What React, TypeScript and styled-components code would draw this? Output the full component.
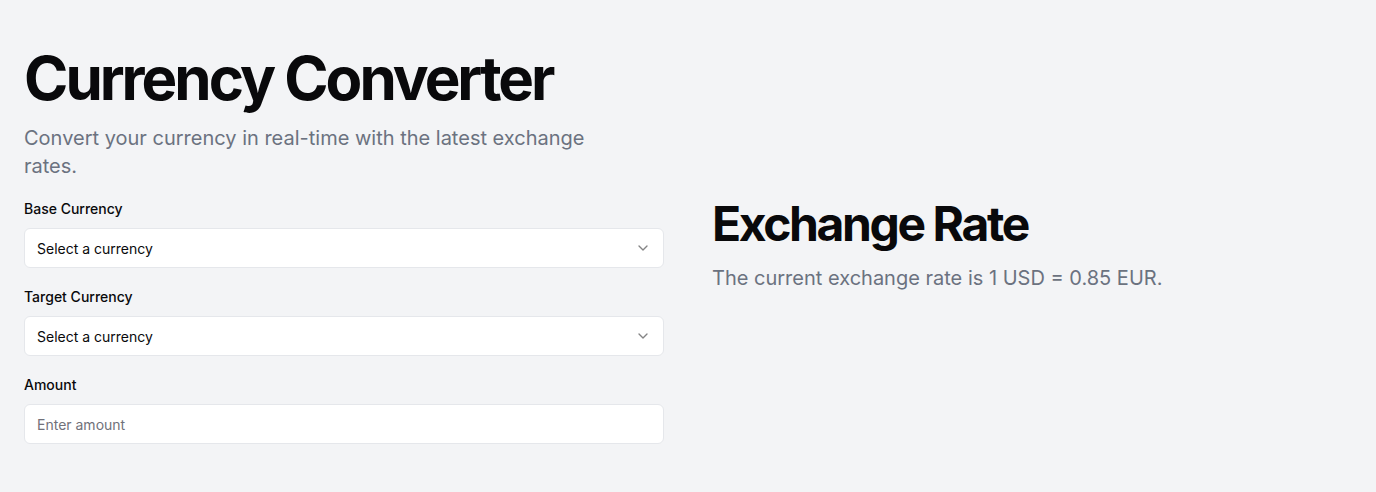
import React from "react";
import styled, { createGlobalStyle } from "styled-components";

const GlobalStyle = createGlobalStyle`
  * { box-sizing: border-box; }
  html, body { margin: 0; padding: 0; background: #f3f4f6; }
  body { font-family: Inter, "Noto Sans", sans-serif; color: #09090b; }
`;

const Page = styled.main`
  min-height: 492px;
  padding: 48px 24px;
  display: grid;
  grid-template-columns: 1fr 1fr;
  gap: 48px;
  align-items: center;
`;

const Column = styled.section`
  display: flex;
  flex-direction: column;
`;

const Title = styled.h1`
  margin: 0;
  font-size: 60px;
  line-height: 60px;
  font-weight: 700;
  letter-spacing: -0.05em;
`;

const Heading = styled.h2`
  margin: 0;
  font-size: 48px;
  line-height: 48px;
  font-weight: 700;
  letter-spacing: -0.05em;
`;

const Lead = styled.p<{ $top: number }>`
  margin: ${(p) => p.$top}px 0 0;
  max-width: 600px;
  font-size: 20px;
  line-height: 28px;
  color: #6b7280;
`;

const Form = styled.div`
  margin-top: 19px;
  display: flex;
  flex-direction: column;
  gap: 19px;
`;

const Field = styled.div`
  display: flex;
  flex-direction: column;
  gap: 9px;
`;

const Label = styled.label`
  font-size: 14px;
  line-height: 20px;
  font-weight: 500;
  color: #09090b;
`;

const Control = styled.div`
  height: 40px;
  display: flex;
  align-items: center;
  justify-content: space-between;
  padding: 0 12px;
  background: #ffffff;
  border: 1px solid #e5e7eb;
  border-radius: 6px;
  font-size: 14px;
  color: #09090b;
`;

const Input = styled.input`
  height: 40px;
  width: 100%;
  padding: 0 12px;
  background: #ffffff;
  border: 1px solid #e5e7eb;
  border-radius: 6px;
  font-family: inherit;
  font-size: 14px;
  color: #09090b;
  outline: none;
  &::placeholder { color: #71717a; }
`;

const Chevron = () => (
  <svg width="16" height="16" viewBox="0 0 24 24" fill="none" stroke="#09090b" strokeOpacity={0.5} strokeWidth={2} strokeLinecap="round" strokeLinejoin="round">
    <path d="m6 9 6 6 6-6" />
  </svg>
);

const Select = ({ id }: { id: string }) => (
  <Control id={id} role="combobox">
    <span>Select a currency</span>
    <Chevron />
  </Control>
);

export default function App() {
  return (
    <>
      <GlobalStyle />
      <Page>
        <Column>
          <Title>Currency Converter</Title>
          <Lead $top={16}>Convert your currency in real-time with the latest exchange rates.</Lead>
          <Form>
            <Field>
              <Label htmlFor="base">Base Currency</Label>
              <Select id="base" />
            </Field>
            <Field>
              <Label htmlFor="target">Target Currency</Label>
              <Select id="target" />
            </Field>
            <Field>
              <Label htmlFor="amount">Amount</Label>
              <Input id="amount" placeholder="Enter amount" />
            </Field>
          </Form>
        </Column>
        <Column>
          <Heading>Exchange Rate</Heading>
          <Lead $top={16}>The current exchange rate is 1 USD = 0.85 EUR.</Lead>
        </Column>
      </Page>
    </>
  );
}
